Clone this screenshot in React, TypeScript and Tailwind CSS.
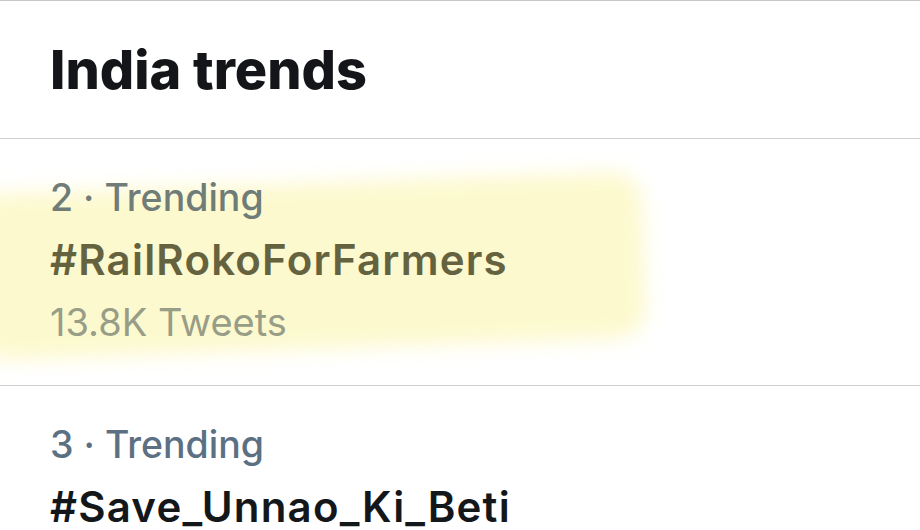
import React from 'react';

type Trend = {
  rank: number;
  tag: string;
  tweets?: string;
  highlighted?: boolean;
};

const trends: Trend[] = [
  { rank: 2, tag: '#RailRokoForFarmers', tweets: '13.8K Tweets', highlighted: true },
  { rank: 3, tag: '#Save_Unnao_Ki_Beti' },
];

const TrendRow = ({ trend }: { trend: Trend }) => {
  return (
    <div className="relative border-b border-[#d0d0d0] px-[50px] pt-[28px] pb-[32px]">
      {trend.highlighted && (
        // marker highlight drawn over the screenshot
        <div className="pointer-events-none absolute left-[-24px] top-[44px] h-[166px] w-[668px] -rotate-[2deg] rounded-[30px] bg-[#fcf8c2] opacity-80 blur-[10px]" />
      )}
      <div className="relative">
        <div
          className={`text-[37.5px] leading-[62px] font-medium ${
            trend.highlighted ? 'text-[#6f7c78]' : 'text-[#5b7083]'
          }`}
        >
          {trend.rank} · Trending
        </div>
        <div
          className={`text-[42px] leading-[62px] font-semibold tracking-[1.2px] ${
            trend.highlighted ? 'text-[#65633f]' : 'text-[#14171a]'
          }`}
        >
          {trend.tag}
        </div>
        {trend.tweets && (
          <div className="text-[38px] leading-[62px] font-normal text-[#989d87]">
            {trend.tweets}
          </div>
        )}
      </div>
    </div>
  );
};

export default function App() {
  return (
    <div
      className="h-[530px] w-[920px] overflow-hidden bg-white"
      style={{ fontFamily: 'Inter, "Noto Sans", sans-serif' }}
    >
      <div className="flex h-[139px] items-center border-t border-b border-t-[#c6c6c6] border-b-[#d0d0d0] px-[50px]">
        <h2 className="text-[54px] font-extrabold text-[#141518]">India trends</h2>
      </div>
      {trends.map((t) => (
        <TrendRow key={t.rank} trend={t} />
      ))}
    </div>
  );
}
